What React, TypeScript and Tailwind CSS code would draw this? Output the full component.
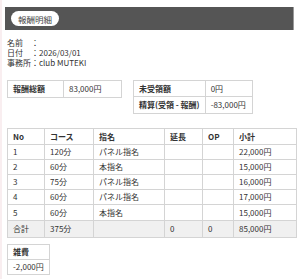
import React from "react";

const font = { fontFamily: '"Noto Sans CJK JP", "Noto Sans", sans-serif' };

const rows = [
  ["1", "120分", "パネル指名", "", "", "22,000円"],
  ["2", "60分", "本指名", "", "", "15,000円"],
  ["3", "75分", "パネル指名", "", "", "16,000円"],
  ["4", "60分", "パネル指名", "", "", "17,000円"],
  ["5", "60分", "本指名", "", "", "15,000円"],
];

const rowH = ["h-[15px]", "h-[15px]", "h-[15px]", "h-[15px]", "h-[16px]"];

export default function App() {
  const td = "border border-[#d4d4d4] px-[5px] py-0 text-left align-middle whitespace-nowrap";
  return (
    <div
      className="w-[300px] h-[279px] bg-white border-l-2 border-[#f9eef0] text-[#333] text-[8px] leading-[10px] overflow-hidden"
      style={font}
    >
      <div className="mt-[7px] ml-[3px] w-[289px] h-[23px] bg-[#555555] border-r border-[#9a9a9a] flex items-center pl-[6px]">
        <div className="h-[15px] px-[7px] rounded-full bg-white text-[#444] flex items-center text-[8.5px]">報酬明細</div>
      </div>

      <div className="mt-[8px] pl-[5px] flex flex-col">
        <div className="h-[10px]">名前　：</div>
        <div className="h-[10px]">日付　：2026/03/01</div>
        <div className="h-[10px]">事務所：club MUTEKI</div>
      </div>

      <div className="mt-[12px] pl-[5px] flex items-start gap-[11px]">
        <table className="border-collapse w-[115px]">
          <tbody>
            <tr className="h-[17px]">
              <td className={`${td} font-bold w-[56px]`}>報酬総額</td>
              <td className={td}>83,000円</td>
            </tr>
          </tbody>
        </table>
        <table className="border-collapse w-[120px]">
          <tbody>
            <tr className="h-[16px]">
              <td className={`${td} font-bold w-[68px]`}>未受領額</td>
              <td className={td}>0円</td>
            </tr>
            <tr className="h-[17px]">
              <td className={`${td} font-bold`}>精算(受領 - 報酬)</td>
              <td className={td}>-83,000円</td>
            </tr>
          </tbody>
        </table>
      </div>

      <div className="mt-[14px] pl-[5px]">
        <table className="border-collapse w-[289px] table-fixed">
          <colgroup>
            <col className="w-[37px]" />
            <col className="w-[49px]" />
            <col className="w-[71px]" />
            <col className="w-[38px]" />
            <col className="w-[31px]" />
            <col className="w-[63px]" />
          </colgroup>
          <thead>
            <tr className="h-[16px] font-bold">
              <th className={`${td} font-bold`}>No</th>
              <th className={`${td} font-bold`}>コース</th>
              <th className={`${td} font-bold`}>指名</th>
              <th className={`${td} font-bold`}>延長</th>
              <th className={`${td} font-bold`}>OP</th>
              <th className={`${td} font-bold`}>小計</th>
            </tr>
          </thead>
          <tbody>
            {rows.map((r, i) => (
              <tr key={i} className={rowH[i]}>
                {r.map((c, j) => (
                  <td key={j} className={td}>{c}</td>
                ))}
              </tr>
            ))}
            <tr className="h-[17px] bg-[#f0f0f0]">
              <td className={td}>合計</td>
              <td className={td}>375分</td>
              <td className={td}></td>
              <td className={td}>0</td>
              <td className={td}>0</td>
              <td className={td}>85,000円</td>
            </tr>
          </tbody>
        </table>
      </div>

      <div className="mt-[6px] pl-[5px]">
        <table className="border-collapse w-[42px]">
          <tbody>
            <tr className="h-[15px]">
              <td className={`${td} font-bold`}>雑費</td>
            </tr>
            <tr className="h-[15px]">
              <td className={td}>-2,000円</td>
            </tr>
          </tbody>
        </table>
      </div>
    </div>
  );
}
